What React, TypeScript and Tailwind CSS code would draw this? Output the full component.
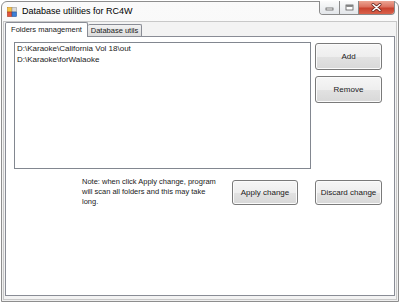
const font = { fontFamily: '"Liberation Sans", Arial, sans-serif' };

function WinButton({ label, className }: { label: string; className: string }) {
  return (
    <div
      className={`flex items-center justify-center rounded-[3px] border border-[#7a7a7a] bg-[linear-gradient(to_bottom,#f6f6f6_0%,#eeeeee_50%,#e2e2e2_51%,#d8d8d8_100%)] shadow-[inset_0_0_0_1px_#fbfbfb] text-[8px] text-[#1a1a1a] ${className}`}
    >
      {label}
    </div>
  );
}

function AppIcon() {
  return (
    <svg width="10" height="10" viewBox="0 0 10 10">
      <rect x="0.5" y="0.5" width="4.5" height="4.5" fill="#f6c445" stroke="#c98a1c" strokeWidth="0.6" />
      <rect x="5" y="0.5" width="4.5" height="4.5" fill="#d9d9d9" stroke="#9a9a9a" strokeWidth="0.6" />
      <rect x="0.5" y="5" width="4.5" height="4.5" fill="#e2553b" stroke="#a8341f" strokeWidth="0.6" />
      <rect x="5" y="5" width="4.5" height="4.5" fill="#3d7fd6" stroke="#24569c" strokeWidth="0.6" />
    </svg>
  );
}

function CaptionButtons() {
  return (
    <div className="ml-auto mr-[3px] -mt-px flex h-[14px] overflow-hidden rounded-b-[4px] border border-t-0 border-[#8a8a8a]">
      {/* minimize */}
      <div className="flex w-[20px] items-center justify-center border-r border-[#8a8a8a] bg-[linear-gradient(to_bottom,#fbfbfb,#e3e6ea)]">
        <svg width="9" height="6" viewBox="0 0 9 6">
          <rect x="1" y="3" width="7" height="2" fill="#ffffff" stroke="#5c5c5c" strokeWidth="0.8" />
        </svg>
      </div>
      {/* maximize */}
      <div className="flex w-[19px] items-center justify-center border-r border-[#8a8a8a] bg-[linear-gradient(to_bottom,#fbfbfb,#e3e6ea)]">
        <svg width="9" height="7" viewBox="0 0 9 7">
          <rect x="1" y="1" width="7" height="5" fill="#ffffff" stroke="#5c5c5c" strokeWidth="0.8" />
          <rect x="1.4" y="1.4" width="6.2" height="1.3" fill="#5c5c5c" />
        </svg>
      </div>
      {/* close */}
      <div className="flex w-[35px] items-center justify-center bg-[linear-gradient(to_bottom,#eba593_0%,#dc7260_45%,#c9432f_55%,#d9614b_100%)]">
        <svg width="11" height="9" viewBox="0 0 11 9">
          <path d="M2 1.5 L9 7.5 M9 1.5 L2 7.5" stroke="#6b2a22" strokeWidth="3" strokeLinecap="round" />
          <path d="M2 1.5 L9 7.5 M9 1.5 L2 7.5" stroke="#ffffff" strokeWidth="1.6" strokeLinecap="round" />
        </svg>
      </div>
    </div>
  );
}

export default function App() {
  return (
    <div className="h-[303px] w-[400px] bg-white p-px" style={font}>
      <div className="flex h-full flex-col rounded-t-[6px] border border-[#8e8e8e] bg-[linear-gradient(to_bottom,#fafafa,#efefef)]">
        {/* Title bar */}
        <div className="flex h-[19px] items-start">
          <div className="flex h-full items-center pl-[5px]">
            <AppIcon />
            <span className="ml-[5px] text-[9px] text-black">Database utilities for RC4W</span>
          </div>
          <CaptionButtons />
        </div>

        {/* Client area */}
        <div className="mx-px mb-px flex flex-1 flex-col border border-[#c8c8c8] bg-[#f3f3f3] pb-[3px] pl-[1px] pr-[1px]">
          {/* Tabs */}
          <div className="relative z-10 flex h-[14px] items-end text-[7.5px] text-[#1a1a1a]">
            <div className="-mb-px flex h-[15px] w-[83px] items-center justify-center rounded-t-[2px] border border-b-0 border-[#898c95] bg-white">
              Folders management
            </div>
            <div className="flex h-[12px] w-[54px] items-center justify-center rounded-t-[2px] border border-b-0 border-l-0 border-[#898c95] bg-[linear-gradient(to_bottom,#f2f2f2,#dcdcdc)]">
              Database utils
            </div>
          </div>

          {/* Tab page */}
          <div className="flex-1 border border-[#898c95] bg-white pl-[8px] pt-[5px]">
            <div className="flex">
              <div className="h-[127px] w-[297px] border border-[#828790] bg-white pl-[2px] text-[8px] leading-[11px] text-[#1a1a1a]">
                <div>D:\Karaoke\California Vol 18\out</div>
                <div>D:\Karaoke\forWalaoke</div>
              </div>
              <div className="ml-[4px] flex flex-col">
                <WinButton label="Add" className="mt-px h-[27px] w-[67px]" />
                <WinButton label="Remove" className="mt-[6px] h-[27px] w-[67px]" />
              </div>
            </div>

            <div className="mt-[11px] flex items-start">
              <p className="-mt-[3px] ml-[68px] w-[145px] text-[7.5px] leading-[10px] text-[#1a1a1a]">
                Note: when click Apply change, program
                <br />
                will scan all folders and this may take
                <br />
                long.
              </p>
              <WinButton label="Apply change" className="ml-[5px] h-[25px] w-[66px]" />
              <WinButton label="Discard change" className="ml-[17px] h-[25px] w-[67px]" />
            </div>
          </div>
        </div>
      </div>
    </div>
  );
}
